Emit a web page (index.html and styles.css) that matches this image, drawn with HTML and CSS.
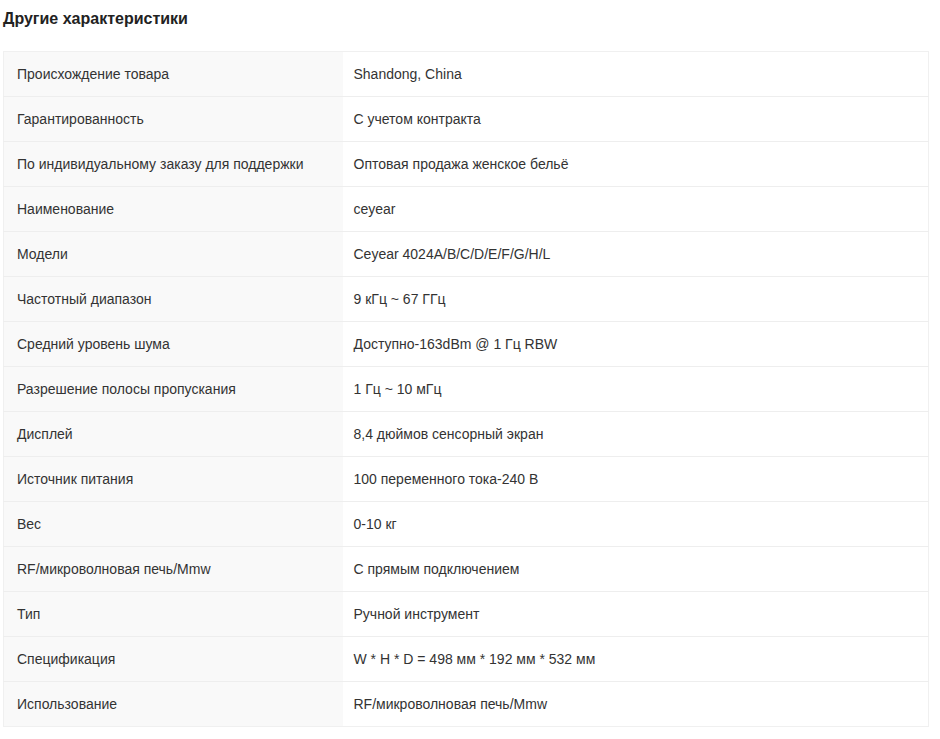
FILE: index.html
```html
<!DOCTYPE html>
<html lang="ru">
<head>
<meta charset="utf-8">
<link rel="stylesheet" href="styles.css">
</head>
<body>
<div class="page">
  <h2 class="title">Другие характеристики</h2>
  <table class="specs">
    <tbody>
      <tr><td class="k">Происхождение товара</td><td class="v">Shandong, China</td></tr>
      <tr><td class="k">Гарантированность</td><td class="v">С учетом контракта</td></tr>
      <tr><td class="k">По индивидуальному заказу для поддержки</td><td class="v">Оптовая продажа женское бельё</td></tr>
      <tr><td class="k">Наименование</td><td class="v">ceyear</td></tr>
      <tr><td class="k">Модели</td><td class="v">Ceyear 4024A/B/C/D/E/F/G/H/L</td></tr>
      <tr><td class="k">Частотный диапазон</td><td class="v">9 кГц ~ 67 ГГц</td></tr>
      <tr><td class="k">Средний уровень шума</td><td class="v">Доступно-163dBm @ 1 Гц RBW</td></tr>
      <tr><td class="k">Разрешение полосы пропускания</td><td class="v">1 Гц ~ 10 мГц</td></tr>
      <tr><td class="k">Дисплей</td><td class="v">8,4 дюймов сенсорный экран</td></tr>
      <tr><td class="k">Источник питания</td><td class="v">100 переменного тока-240 В</td></tr>
      <tr><td class="k">Вес</td><td class="v">0-10 кг</td></tr>
      <tr><td class="k">RF/микроволновая печь/Mmw</td><td class="v">С прямым подключением</td></tr>
      <tr><td class="k">Тип</td><td class="v">Ручной инструмент</td></tr>
      <tr><td class="k">Спецификация</td><td class="v">W * H * D = 498 мм * 192 мм * 532 мм</td></tr>
      <tr><td class="k">Использование</td><td class="v">RF/микроволновая печь/Mmw</td></tr>
    </tbody>
  </table>
</div>
</body>
</html>
```
FILE: styles.css
```css
html, body {
  margin: 0;
  padding: 0;
  background: #fff;
}
.page {
  padding: 0 11px 0 3px;
  font-family: "Liberation Sans", Arial, sans-serif;
  color: #333;
}
.title {
  margin: 0;
  padding-top: 10px;
  height: 51px;
  box-sizing: border-box;
  font-size: 16px;
  line-height: 18px;
  font-weight: bold;
  color: #222;
}
.specs {
  width: 100%;
  border-collapse: collapse;
  border: 1px solid #f0f0f0;
  font-size: 14px;
}
.specs td {
  height: 45px;
  box-sizing: border-box;
  padding: 0 12px 0 11px;
  border-bottom: 1px solid #eeeeee;
  vertical-align: middle;
}
.specs tr:last-child td {
  border-bottom: none;
}
.specs .k {
  width: 339px;
  padding-left: 13px;
  background: #f9f9f9;
}
.specs .v {
  background: #fff;
}
```
